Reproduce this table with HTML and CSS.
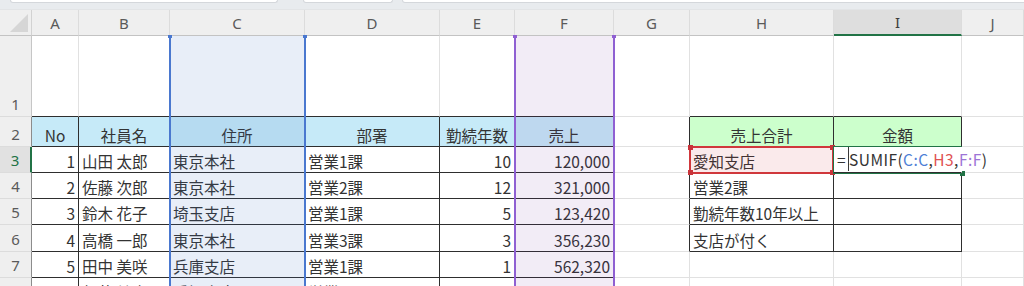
FILE: index.html
```html
<!DOCTYPE html>
<html lang="ja">
<head>
<meta charset="utf-8">
<title>SUMIF</title>
<link rel="stylesheet" href="styles.css">
</head>
<body>
<div class="topbar">
  <div class="box box1"></div>
  <div class="box box2"></div>
  <div class="box box3"></div>
</div>
<div class="sheet">
  <div class="grid cells">
    <!-- column headers -->
    <div class="corner"><svg width="20" height="20" viewBox="0 0 20 20"><polygon points="19,1 19,19 1,19" fill="#d6d6d6"/></svg></div>
    <div class="ch">A</div><div class="ch">B</div><div class="ch">C</div><div class="ch">D</div><div class="ch">E</div><div class="ch">F</div><div class="ch">G</div><div class="ch">H</div><div class="ch sel">I</div><div class="ch">J</div>

    <!-- row 1 -->
    <div class="rh">1</div>
    <div class="c tb"></div><div class="c tb"></div><div class="c tb"></div><div class="c tb"></div><div class="c tb"></div><div class="c tb"></div>
    <div class="c"></div><div class="c tb"></div><div class="c tb"></div><div class="c"></div>

    <!-- row 2 -->
    <div class="rh tl">2</div>
    <div class="c t hd m">No</div><div class="c t hd m">社員名</div><div class="c t hd m">住所</div><div class="c t hd m">部署</div><div class="c t hd m">勤続年数</div><div class="c t hd m">売上</div>
    <div class="c tr"></div><div class="c t hg m">売上合計</div><div class="c t hg m">金額</div><div class="c"></div>

    <!-- row 3 -->
    <div class="rh sel">3</div>
    <div class="c t r">1</div><div class="c t">山田 太郎</div><div class="c t">東京本社</div><div class="c t">営業1課</div><div class="c t r">10</div><div class="c t r">120,000</div>
    <div class="c tr"></div><div class="c t">愛知支店</div>
    <div class="c t edit"><span class="editor">=<span class="caret"></span>SUMIF(<span class="rc">C:C</span>,<span class="rh3">H3</span>,<span class="rf">F:F</span>)</span></div>
    <div class="c"></div>

    <!-- row 4 -->
    <div class="rh tl">4</div>
    <div class="c t r">2</div><div class="c t">佐藤 次郎</div><div class="c t">東京本社</div><div class="c t">営業2課</div><div class="c t r">12</div><div class="c t r">321,000</div>
    <div class="c tr"></div><div class="c t">営業2課</div><div class="c t"></div><div class="c"></div>

    <!-- row 5 -->
    <div class="rh tl">5</div>
    <div class="c t r">3</div><div class="c t">鈴木 花子</div><div class="c t">埼玉支店</div><div class="c t">営業1課</div><div class="c t r">5</div><div class="c t r">123,420</div>
    <div class="c tr"></div><div class="c t">勤続年数10年以上</div><div class="c t"></div><div class="c"></div>

    <!-- row 6 -->
    <div class="rh tl">6</div>
    <div class="c t r">4</div><div class="c t">高橋 一郎</div><div class="c t">東京本社</div><div class="c t">営業3課</div><div class="c t r">3</div><div class="c t r">356,230</div>
    <div class="c tr"></div><div class="c t">支店が付く</div><div class="c t"></div><div class="c"></div>

    <!-- row 7 -->
    <div class="rh tl">7</div>
    <div class="c t r">5</div><div class="c t">田中 美咲</div><div class="c t">兵庫支店</div><div class="c t">営業1課</div><div class="c t r">1</div><div class="c t r">562,320</div>
    <div class="c"></div><div class="c"></div><div class="c"></div><div class="c"></div>

    <!-- row 8 -->
    <div class="rh tl">8</div>
    <div class="c t r">6</div><div class="c t">伊藤 健太</div><div class="c t">愛知支店</div><div class="c t">営業2課</div><div class="c t r">8</div><div class="c t r">215,000</div>
    <div class="c"></div><div class="c"></div><div class="c"></div><div class="c"></div>
  </div>

  <div class="grid overlay">
    <div class="hl hl-c"></div>
    <div class="hl hl-f"></div>
    <div class="sel-h">
      <span class="hnd h-tl"></span><span class="hnd h-tr"></span><span class="hnd h-bl"></span><span class="hnd h-br"></span>
    </div>
    <div class="sel-i"><span class="ghnd"></span></div>
  </div>
</div>
</body>
</html>
```
FILE: styles.css
```css
* { box-sizing: border-box; margin: 0; padding: 0; }

body {
  margin: 0;
  width: 1024px;
  height: 286px;
  overflow: hidden;
  background: #ffffff;
  font-family: "Noto Sans CJK JP", "Noto Sans", sans-serif;
  color: #333333;
}

/* formula-bar remnant strip */
.topbar {
  height: 10px;
  background: #e8ebee;
  display: flex;
  align-items: flex-start;
  border-bottom: 1px solid #e2e4e6;
}
.box {
  height: 3px;
  background: #ffffff;
  border: 1px solid #d4d7db;
  border-top: 0;
  border-radius: 0 0 4px 4px;
}
.box1 { width: 268px; margin-left: 10px; }
.box2 { width: 90px; margin-left: 25px; }
.box3 { flex: 1; margin-left: 9px; margin-right: -6px; }

/* sheet */
.sheet { position: relative; }
.grid {
  display: grid;
  grid-template-columns: 32px 47px 91px 135px 135px 75px 99px 76px 144px 128px 1fr;
  grid-template-rows: 26px 81px 30px 26px 26px 26px 27px 26px 26px;
}
.overlay {
  position: absolute;
  inset: 0;
  pointer-events: none;
}

/* headers */
.corner {
  background: #efefef;
  border-right: 1px solid #d2d2d2;
  border-bottom: 1px solid #c3c3c3;
  display: flex;
  align-items: flex-end;
  justify-content: flex-end;
  padding: 0 2px 2px 0;
}
.ch {
  background: #efefef;
  border-right: 1px solid #dcdcdc;
  border-bottom: 1px solid #c3c3c3;
  display: flex;
  align-items: center;
  justify-content: center;
  font-family: "Noto Sans", "Noto Sans CJK JP", sans-serif;
  font-size: 15px;
  color: #5a5a5a;
}
.ch.sel {
  background: #dedede;
  border-bottom: 2px solid #217346;
  color: #3c3c3c;
}
.rh {
  background: #efefef;
  border-right: 1px solid #c6c6c6;
  border-bottom: 1px solid #dcdcdc;
  display: flex;
  align-items: flex-end;
  justify-content: center;
  padding-bottom: 2px;
  font-family: "Noto Sans", "Noto Sans CJK JP", sans-serif;
  font-size: 15px;
  line-height: 20px;
  color: #5a5a5a;
}
.rh.tl { border-right-color: #8c8c8c; }
.rh.sel {
  background: #e1e1e1;
  color: #217346;
  border-right: 2px solid #217346;
}

/* cells */
.c {
  border-right: 1px solid #e1e1e1;
  border-bottom: 1px solid #e1e1e1;
  display: flex;
  align-items: flex-end;
  padding: 0 3px 1px 3px;
  font-size: 15.5px;
  line-height: 20px;
  white-space: nowrap;
  overflow: hidden;
  background: #ffffff;
}
.r { justify-content: flex-end; }
.m { justify-content: center; }
.t { border-right-color: #2e2e2e; border-bottom-color: #2e2e2e; }
.tb { border-bottom-color: #2e2e2e; }
.tr { border-right-color: #2e2e2e; }
.hd { background: #c6eaf8; }
.hg { background: #ccffcc; }

/* in-cell editor */
.edit {
  overflow: visible;
  position: relative;
  z-index: 1;
  border-right-color: transparent;
}
.editor {
  background: #ffffff;
  padding-right: 2px;
  letter-spacing: 0.45px;
}
.caret {
  display: inline-block;
  width: 1px;
  height: 24px;
  background: #3a3a3a;
  margin: 0 0 0 2px;
  vertical-align: -5px;
}
.rc { color: #4f7fd6; }
.rh3 { color: #e05252; }
.rf { color: #9d74d6; }

/* range highlights */
.hl {
  grid-row: 2 / 10;
  margin: 0 -1px;
  border-left: 2px solid;
  border-right: 2px solid;
  position: relative;
}
.hl::before, .hl::after {
  content: "";
  position: absolute;
  top: -1px;
  width: 4px;
  height: 3px;
}
.hl::before { left: -3px; }
.hl::after { right: -3px; }
.hl-c {
  grid-column: 4;
  border-color: #4a78cf;
  background: rgba(68, 114, 196, 0.12);
}
.hl-c::before, .hl-c::after { background: #4a78cf; }
.hl-f {
  grid-column: 7;
  border-color: #8f60d2;
  background: rgba(112, 48, 160, 0.09);
}
.hl-f::before, .hl-f::after { background: #8f60d2; }

.sel-h {
  grid-column: 9;
  grid-row: 4;
  margin: -1px 0 -1px -1px;
  border: 2px solid #d0383c;
  background: rgba(209, 52, 56, 0.1);
  position: relative;
}
.hnd {
  position: absolute;
  width: 5px;
  height: 5px;
  background: #c9343a;
}
.h-tl { left: -3px; top: -3px; }
.h-tr { right: -3px; top: -3px; }
.h-bl { left: -3px; bottom: -3px; }
.h-br { right: -3px; bottom: -3px; }

.sel-i {
  grid-column: 10;
  grid-row: 4;
  margin: -1px 0 -1px -1px;
  border: 2px solid #217346;
  border-right: 0;
  position: relative;
}
.ghnd {
  position: absolute;
  right: -3px;
  bottom: -4px;
  width: 5px;
  height: 5px;
  background: #217346;
}
```
